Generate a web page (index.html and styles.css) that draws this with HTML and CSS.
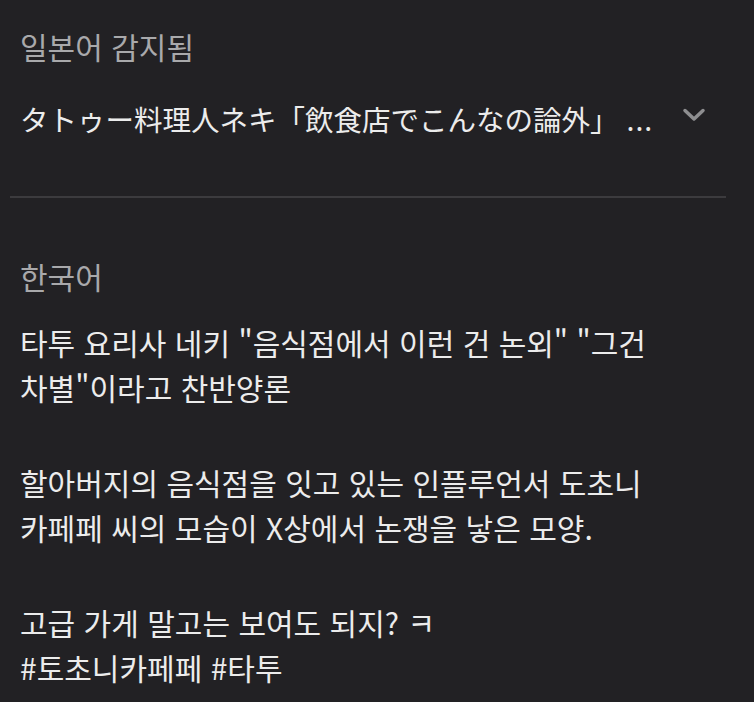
FILE: index.html
```html
<!DOCTYPE html>
<html lang="ko">
<head>
    <meta charset="utf-8">
    <title>번역</title>
    <link rel="stylesheet" href="styles.css">
</head>
<body>
    <div class="source">
        <div class="lang">일본어 감지됨</div>
        <div class="source-row">
            <div class="source-text" lang="ja">タトゥー料理人ネキ「飲食店でこんなの論外」<span class="dots">...</span></div>
            <svg class="chevron" width="24" height="16" viewBox="0 0 24 16">
                <path d="M3 3.5 L12 12 L21 3.5" fill="none" stroke="#8e8e90" stroke-width="3.5" stroke-linecap="round" stroke-linejoin="round"/>
            </svg>
        </div>
    </div>
    <div class="divider"></div>
    <div class="target">
        <div class="lang">한국어</div>
        <p class="target-text">타투 요리사 네키 "음식점에서 이런 건 논외" "그건 차별"이라고 찬반양론</p>
        <p class="target-text">할아버지의 음식점을 잇고 있는 인플루언서 도초니 카페페 씨의 모습이 X상에서 논쟁을 낳은 모양.</p>
        <p class="target-text">고급 가게 말고는 보여도 되지? ㅋ<br>#토초니카페페 #타투</p>
    </div>
</body>
</html>
```

FILE: styles.css
```css
body {
    margin: 0;
    background-color: #222124;
    color: #ececec;
    font-family: "Noto Sans CJK KR", "Noto Sans CJK JP", sans-serif;
}
.source {
    padding: 24px 0 0 20px;
}
.lang {
    color: #a9a9ab;
    font-size: 30px;
    line-height: 44px;
}
.source-row {
    display: flex;
    align-items: center;
    margin-top: 28px;
    height: 44px;
}
.source-text {
    font-size: 28.5px;
    width: 640px;
    white-space: nowrap;
}
.dots {
    margin-left: 8px;
    letter-spacing: 1px;
}
.chevron {
    margin-left: 22px;
    margin-top: -6px;
}
.divider {
    height: 2px;
    background-color: #3c3b3e;
    margin: 56px 28px 0 10px;
}
.target {
    padding: 56px 90px 0 20px;
}
.target-text {
    margin: 0 0 50px;
    font-size: 30px;
    line-height: 45px;
}
.target-text:last-child {
    margin-bottom: 0;
}
.lang + .target-text {
    margin-top: 22px;
}
```
